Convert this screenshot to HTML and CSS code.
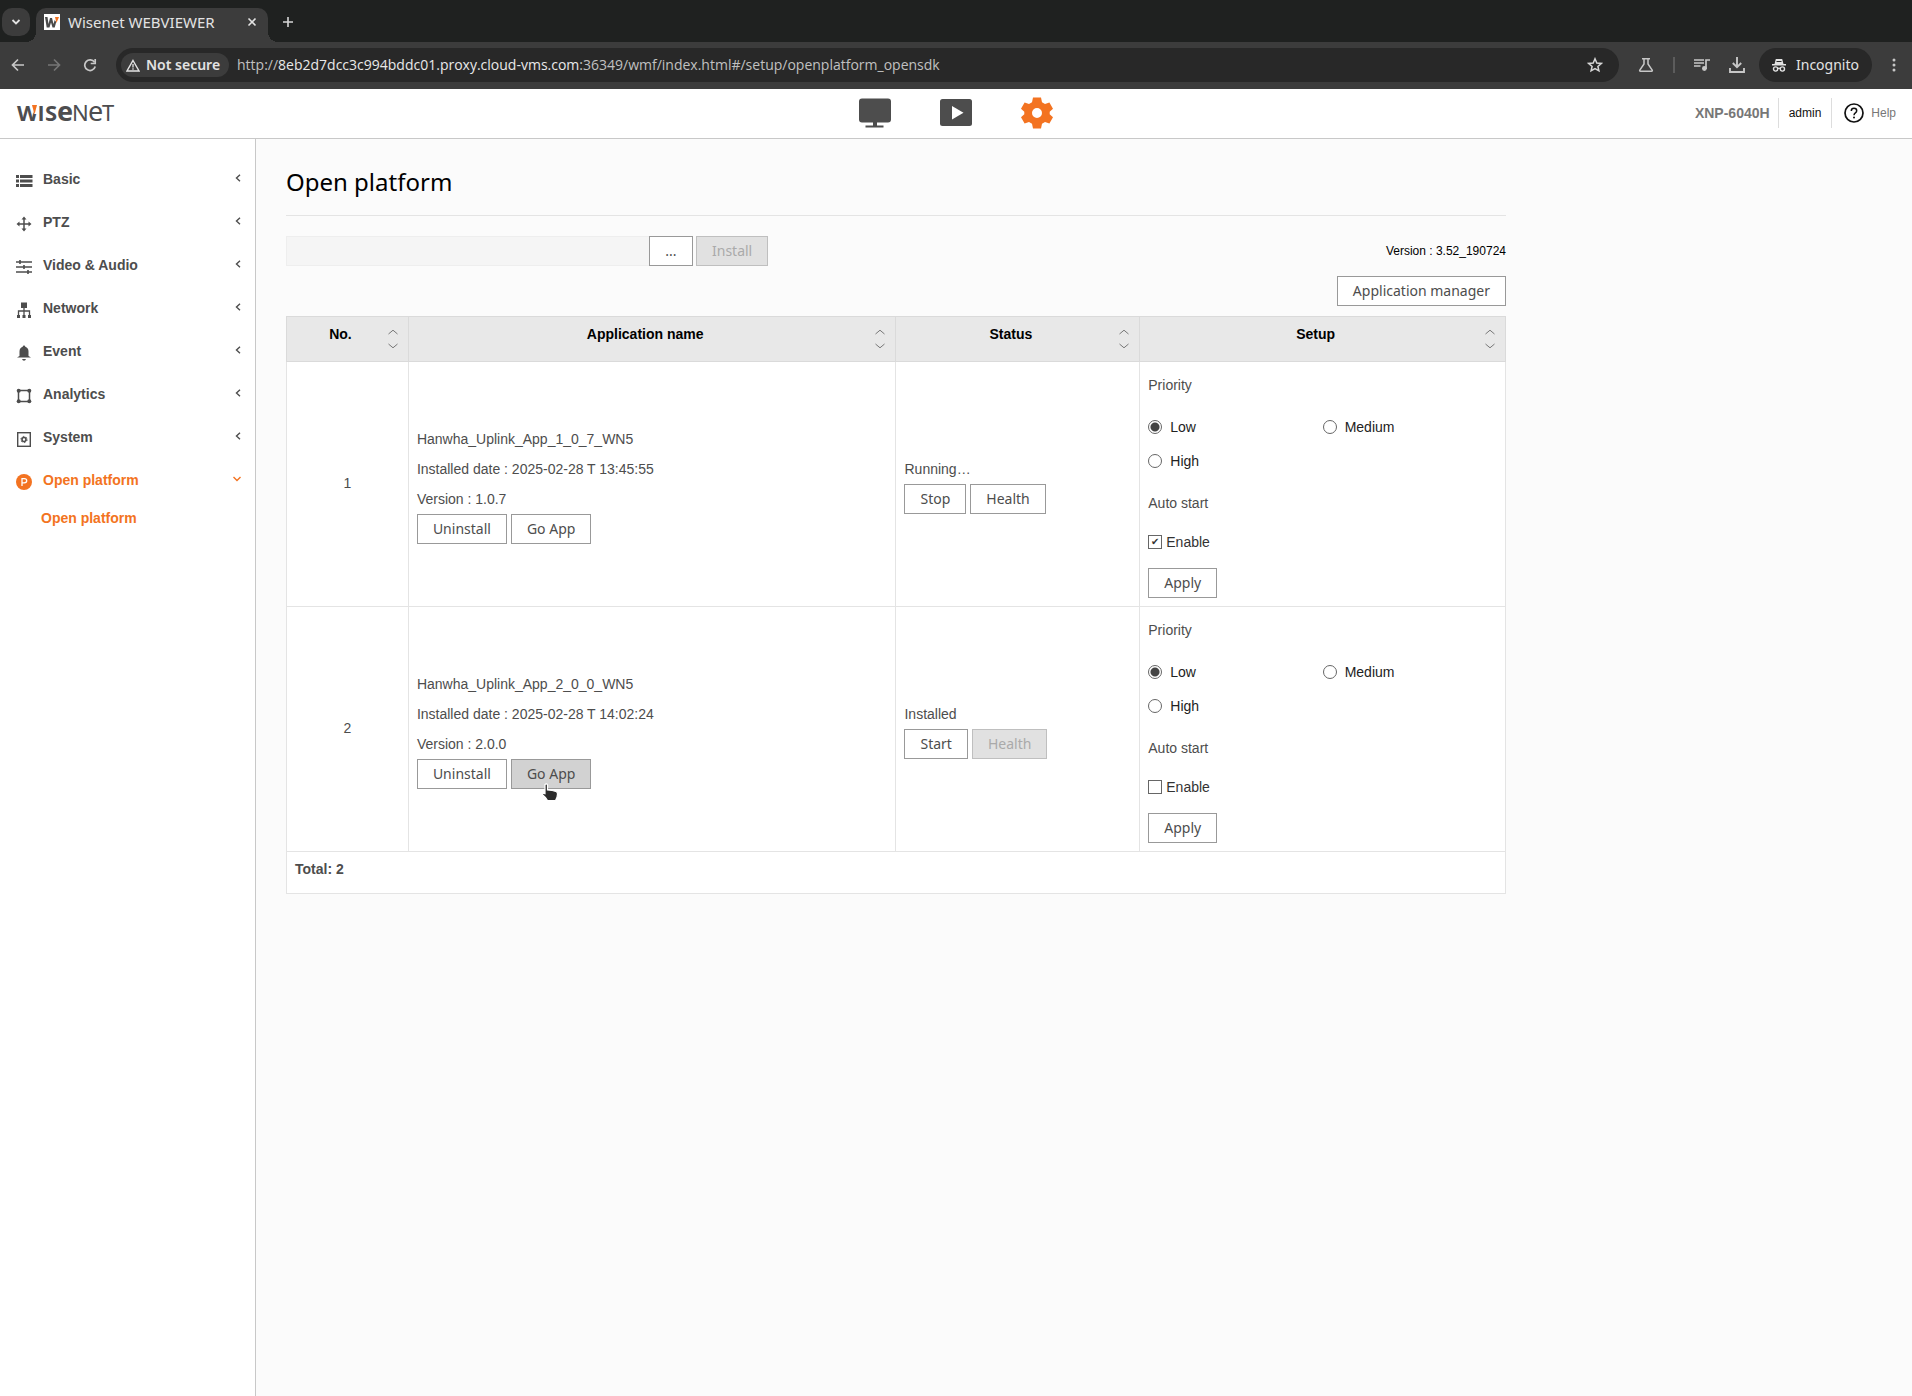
FILE: index.html
```html
<!DOCTYPE html>
<html lang="en">
<head>
<meta charset="utf-8">
<title>Wisenet WEBVIEWER</title>
<link rel="stylesheet" href="styles.css">
</head>
<body>
<div class="browser">
  <div class="tabstrip">
    <button class="tab-search" aria-label="Search tabs"><svg width="10" height="8" viewBox="0 0 10 8"><path d="M1.5 2 5 5.5 8.500 2" fill="none" stroke="#e3e3e3" stroke-width="1.800"/></svg></button>
    <div class="tab">
      <svg class="favicon" width="16" height="16" viewBox="0 0 16 16"><rect width="16" height="16" fill="#fff"/><path d="M1 3h2.500l1 7 1.500-6h2l1.500 6 1.200-4 1.500 2-1.500 5.500H8.500L7 8.500 5.500 13.500H2.700z" fill="#4a4a4a"/><path d="M11 3h4l-2.500 6z" fill="#f37321"/></svg>
      <span class="tab-title">Wisenet WEBVIEWER</span>
      <button class="icon-btn" aria-label="Close tab"><svg width="10" height="10" viewBox="0 0 10 10"><path d="M1.500 1.500l7 7M8.500 1.500l-7 7" stroke="#e3e3e3" stroke-width="1.600"/></svg></button>
    </div>
    <button class="icon-btn new-tab" aria-label="New tab"><svg width="12" height="12" viewBox="0 0 12 12"><path d="M6 1v10M1 6h10" stroke="#d6d6d6" stroke-width="1.600"/></svg></button>
  </div>
  <div class="toolbar">
    <div class="nav-buttons">
      <button class="icon-btn" aria-label="Back"><svg width="14" height="14" viewBox="0 0 14 14"><path d="M13 7H2M7 1.500 1.500 7 7 12.500" fill="none" stroke="#c7c7c7" stroke-width="1.700"/></svg></button>
      <button class="icon-btn" aria-label="Forward"><svg width="14" height="14" viewBox="0 0 14 14"><path d="M1 7h11M7 1.500 12.500 7 7 12.500" fill="none" stroke="#757575" stroke-width="1.700"/></svg></button>
      <button class="icon-btn" aria-label="Reload"><svg width="14" height="14" viewBox="0 0 14 14"><path d="M11.500 4.300A5.300 5.300 0 1 0 12.200 8.500" fill="none" stroke="#c7c7c7" stroke-width="1.700"/><path d="M12.200 1v4.500H7.700" fill="none" stroke="#c7c7c7" stroke-width="1.700"/></svg></button>
    </div>
    <div class="omnibox">
      <button class="chip"><svg width="14" height="13" viewBox="0 0 14 13"><path d="M7 1.500 13 12H1z" fill="none" stroke="#e3e3e3" stroke-width="1.400"/><path d="M7 5v3.500M7 9.300v1.400" stroke="#e3e3e3" stroke-width="1.300"/></svg><span>Not secure</span></button>
      <span class="url">http://<b>8eb2d7dcc3c994bddc01.proxy.cloud-vms.com</b>:36349/wmf/index.html#/setup/openplatform_opensdk</span>
      <button class="icon-btn star" aria-label="Bookmark"><svg width="16" height="16" viewBox="0 0 16 16"><path d="M8 1.800 9.800 6l4.500.4-3.400 3 1 4.400L8 11.500l-3.900 2.300 1-4.400-3.400-3L6.200 6z" fill="none" stroke="#d6d6d6" stroke-width="1.500"/></svg></button>
    </div>
    <button class="icon-btn" aria-label="Labs"><svg width="16" height="16" viewBox="0 0 16 16"><path d="M4 1.800h8M6 2v5L1.800 13.200q-.5 1 .6 1h11.200q1.100 0 .6-1L10 7V2" fill="none" stroke="#c7c7c7" stroke-width="1.500"/></svg></button>
    <span class="tool-sep"></span>
    <button class="icon-btn" aria-label="Media"><svg width="16" height="14" viewBox="0 0 16 14"><path d="M0 2h10M0 5h10M0 8h6.500M12 11V2h4" fill="none" stroke="#c7c7c7" stroke-width="1.700"/><circle cx="10.400" cy="10.500" r="2.400" fill="#c7c7c7"/></svg></button>
    <button class="icon-btn" aria-label="Downloads"><svg width="16" height="16" viewBox="0 0 16 16"><path d="M8 0v10M3.800 6 8 10.200 12.200 6M1 11v4h14v-4" fill="none" stroke="#c7c7c7" stroke-width="1.900"/></svg></button>
    <button class="incognito"><svg width="14" height="14" viewBox="0 0 14 14"><path d="M3.800 1h6.400L11.500 6H14v1.400H0V6h2.500z" fill="#e3e3e3"/><path d="M4.500 3.500h5" stroke="#282828" stroke-width="1"/><circle cx="3.600" cy="11" r="2.100" fill="none" stroke="#e3e3e3" stroke-width="1.400"/><circle cx="10.400" cy="11" r="2.100" fill="none" stroke="#e3e3e3" stroke-width="1.400"/><path d="M5.500 10.600q1.500-.8 3 0" fill="none" stroke="#e3e3e3" stroke-width="1.200"/></svg><span>Incognito</span></button>
    <button class="icon-btn menu" aria-label="Menu"><svg width="4" height="14" viewBox="0 0 4 14"><g fill="#c7c7c7"><circle cx="2" cy="2" r="1.500"/><circle cx="2" cy="7" r="1.500"/><circle cx="2" cy="12" r="1.500"/></g></svg></button>
  </div>
</div>

<header class="app-header">
  <a class="logo" href="#" aria-label="Wisenet"><svg width="106" height="44" viewBox="0 0 106 44"><g class="logo-text" fill="#4d4d4f"><text x="1" y="30" font-size="22" font-weight="700">W</text><path d="M14.500 10H24v13h-6z" fill="#fff"/><text class="plain" x="22" y="30" font-size="22" font-weight="700">I</text><text x="29" y="30" font-size="22" font-weight="700">S</text><text x="41" y="30" font-size="27" font-weight="700">e</text><text x="56" y="30" font-size="22">N</text><text x="72" y="30" font-size="27">e</text><text x="86" y="30" font-size="22">T</text></g><path d="M16 14h5l-2.500 9.500z" fill="#f37321"/></svg></a>
  <nav class="modes">
    <a href="#" aria-label="Live"><svg width="34" height="32" viewBox="0 0 34 32"><path d="M4 1.500h26q3 0 3 3v18q0 3-3 3H19v3h6.500v2h-18v-2H15v-3H4q-3 0-3-3v-18q0-3 3-3z" fill="#4d4d4d"/></svg></a>
    <a href="#" aria-label="Playback"><svg width="34" height="32" viewBox="0 0 34 32"><rect x="1" y="2" width="32" height="27" rx="2.500" fill="#4d4d4d"/><path d="M13 9v13.500L24.500 15.700z" fill="#fff"/></svg></a>
    <a href="#" aria-label="Setup"><svg width="34" height="32" viewBox="0 0 34 32"><path fill-rule="evenodd" d="M13 .5h8l1 4.700 3 1.800 4.400-1.500 3.600 6.200-3.300 3v2.600l3.300 3-3.600 6.200-4.400-1.500-3 1.800-1 4.700h-8l-1-4.700-3-1.800-4.400 1.500L1 20.300l3.300-3v-2.600l-3.300-3 3.600-6.200L9 7l3-1.800zM17 11a5 5 0 1 0 0 10 5 5 0 0 0 0-10z" fill="#f37321"/></svg></a>
  </nav>
  <div class="account">
    <span class="model">XNP-6040H</span>
    <a class="user" href="#">admin</a>
    <a class="help" href="#"><svg width="20" height="20" viewBox="0 0 20 20"><circle cx="10" cy="10" r="9" fill="none" stroke="#111" stroke-width="1.700"/><path d="M7.300 8q0-2.700 2.700-2.700T12.700 7.700q0 1.300-1.300 2.200T10 12.200" fill="none" stroke="#111" stroke-width="1.500"/><circle cx="10" cy="14.600" r="1" fill="#111"/></svg><span>Help</span></a>
  </div>
</header>

<div class="shell">
  <nav class="sidebar">
    <a class="item" href="#"><svg width="18" height="18" viewBox="0 0 18 18"><path d="M1 4.500h3M1 9h3M1 13.500h3M5 4.500h12.500M5 9h12.500M5 13.500h12.500" stroke="#4d4d4d" stroke-width="3"/></svg><span>Basic</span><svg class="chev" width="6" height="8" viewBox="0 0 6 8"><path d="M5 .8 1.500 4 5 7.200"/></svg></a>
    <a class="item" href="#"><svg width="18" height="18" viewBox="0 0 18 18"><path d="M9 3v12M3 9h12" stroke="#4d4d4d" stroke-width="1.500"/><path d="M9 1.500 11.500 4.500h-5zM9 16.500 6.500 13.500h5zM1.500 9 4.500 6.500v5zM16.500 9 13.500 11.500v-5z" fill="#4d4d4d"/></svg><span>PTZ</span><svg class="chev" width="6" height="8" viewBox="0 0 6 8"><path d="M5 .8 1.500 4 5 7.200"/></svg></a>
    <a class="item" href="#"><svg width="18" height="18" viewBox="0 0 18 18"><path d="M1 4h16M1 9h16M1 14h16M5 2v4M9 7v4M13 12v4" stroke="#4d4d4d" stroke-width="1.600"/></svg><span>Video &amp; Audio</span><svg class="chev" width="6" height="8" viewBox="0 0 6 8"><path d="M5 .8 1.500 4 5 7.200"/></svg></a>
    <a class="item" href="#"><svg width="18" height="18" viewBox="0 0 18 18"><path d="M6 1.500h6V7H6zM2 14h3v3H2zM7.500 14h3v3h-3zM13 14h3v3h-3z" fill="#4d4d4d"/><path d="M9 7v8M3.500 15v-5h11v5" fill="none" stroke="#4d4d4d" stroke-width="1.300"/></svg><span>Network</span><svg class="chev" width="6" height="8" viewBox="0 0 6 8"><path d="M5 .8 1.500 4 5 7.200"/></svg></a>
    <a class="item" href="#"><svg width="18" height="18" viewBox="0 0 18 18"><path d="M9 1.500q1.200 0 1.300 1.200 3.200 1 3.200 4.800v4.500l2.500 1.500H2L4.500 12V7.500q0-3.800 3.200-4.800Q7.800 1.500 9 1.500zM7 15h4q-.5 1.700-2 1.700T7 15z" fill="#4d4d4d"/></svg><span>Event</span><svg class="chev" width="6" height="8" viewBox="0 0 6 8"><path d="M5 .8 1.500 4 5 7.200"/></svg></a>
    <a class="item" href="#"><svg width="18" height="18" viewBox="0 0 18 18"><rect x="3.500" y="3.500" width="11" height="11" fill="none" stroke="#4d4d4d" stroke-width="1.500"/><g fill="#4d4d4d"><circle cx="3.700" cy="3.700" r="2"/><circle cx="14.300" cy="3.700" r="2"/><circle cx="3.700" cy="14.300" r="2"/><circle cx="14.300" cy="14.300" r="2"/></g></svg><span>Analytics</span><svg class="chev" width="6" height="8" viewBox="0 0 6 8"><path d="M5 .8 1.500 4 5 7.200"/></svg></a>
    <a class="item" href="#"><svg width="18" height="18" viewBox="0 0 18 18"><rect x="2.700" y="2.700" width="12.600" height="13.600" fill="none" stroke="#4d4d4d" stroke-width="1.400"/><circle cx="9" cy="9.500" r="2" fill="none" stroke="#4d4d4d" stroke-width="1.600"/><circle cx="9" cy="9.500" r="3.100" fill="none" stroke="#4d4d4d" stroke-width="1" stroke-dasharray="1.600 1.640"/></svg><span>System</span><svg class="chev" width="6" height="8" viewBox="0 0 6 8"><path d="M5 .8 1.500 4 5 7.200"/></svg></a>
    <a class="item active" href="#"><svg width="18" height="18" viewBox="0 0 18 18"><circle cx="9" cy="9" r="8" fill="#f37321"/><path d="M7 13V5.700h2.300q2.400 0 2.400 2T9.300 9.800H7" fill="none" stroke="#fff" stroke-width="1.300"/></svg><span>Open platform</span><svg class="chev" width="8" height="6" viewBox="0 0 8 6"><path d="M.5 1 4 4.500 7.500 1"/></svg></a>
    <a class="subitem" href="#">Open platform</a>
  </nav>

  <main class="content">
    <h1>Open platform</h1>
    <div class="install-row">
      <input class="file" type="text" aria-label="Application file" disabled>
      <button class="btn browse">...</button>
      <button class="btn install" disabled>Install</button>
      <span class="fw">Version : 3.52_190724</span>
    </div>
    <div class="manager-row"><button class="btn">Application manager</button></div>

    <table class="apps">
      <colgroup><col class="c-no"><col class="c-name"><col class="c-status"><col class="c-setup"></colgroup>
      <thead>
        <tr>
          <th><div class="th"><span>No.</span><svg width="10" height="20" viewBox="0 0 10 20"><path d="M.5 5 5 1.200 9.500 5M.5 15 5 18.800 9.500 15"/></svg></div></th>
          <th><div class="th"><span>Application name</span><svg width="10" height="20" viewBox="0 0 10 20"><path d="M.5 5 5 1.200 9.500 5M.5 15 5 18.800 9.500 15"/></svg></div></th>
          <th><div class="th"><span>Status</span><svg width="10" height="20" viewBox="0 0 10 20"><path d="M.5 5 5 1.200 9.500 5M.5 15 5 18.800 9.500 15"/></svg></div></th>
          <th><div class="th"><span>Setup</span><svg width="10" height="20" viewBox="0 0 10 20"><path d="M.5 5 5 1.200 9.500 5M.5 15 5 18.800 9.500 15"/></svg></div></th>
        </tr>
      </thead>
      <tbody>
        <tr>
          <td class="num">1</td>
          <td>
            <p>Hanwha_Uplink_App_1_0_7_WN5</p>
            <p>Installed date : 2025-02-28 T 13:45:55</p>
            <p>Version : 1.0.7</p>
            <div class="btns"><button class="btn">Uninstall</button><button class="btn">Go App</button></div>
          </td>
          <td>
            <p>Running…</p>
            <div class="btns"><button class="btn">Stop</button><button class="btn">Health</button></div>
          </td>
          <td>
            <p id="p1">Priority</p>
            <div class="radios" role="radiogroup" aria-labelledby="p1">
              <label><input type="radio" name="prio1" checked>Low</label>
              <label><input type="radio" name="prio1">Medium</label>
              <label><input type="radio" name="prio1">High</label>
            </div>
            <p>Auto start</p>
            <label class="enable"><input type="checkbox" checked>Enable</label>
            <button class="btn">Apply</button>
          </td>
        </tr>
        <tr>
          <td class="num">2</td>
          <td>
            <p>Hanwha_Uplink_App_2_0_0_WN5</p>
            <p>Installed date : 2025-02-28 T 14:02:24</p>
            <p>Version : 2.0.0</p>
            <div class="btns"><button class="btn">Uninstall</button><button class="btn hovered">Go App<svg class="pointer" width="18" height="19" viewBox="0 0 18 19"><path d="M4 1.500q1.500-1.300 2.500.3V7q5 .2 8.500 1.500 1.500.6 1.500 2.500 0 3.500-2 6.500H6.500Q5 14.500 1.300 11.500q.2-1.800 2.700-.8z" fill="#2b2b2b" stroke="#fff" stroke-width="1.200"/></svg></button></div>
          </td>
          <td>
            <p>Installed</p>
            <div class="btns"><button class="btn">Start</button><button class="btn" disabled>Health</button></div>
          </td>
          <td>
            <p id="p2">Priority</p>
            <div class="radios" role="radiogroup" aria-labelledby="p2">
              <label><input type="radio" name="prio2" checked>Low</label>
              <label><input type="radio" name="prio2">Medium</label>
              <label><input type="radio" name="prio2">High</label>
            </div>
            <p>Auto start</p>
            <label class="enable"><input type="checkbox">Enable</label>
            <button class="btn">Apply</button>
          </td>
        </tr>
      </tbody>
      <tfoot><tr><td colspan="4">Total: 2</td></tr></tfoot>
    </table>
  </main>
</div>
</body>
</html>
```

FILE: styles.css
```css
* { box-sizing: border-box; }

body {
  margin: 0;
  min-height: 100vh;
  display: flex;
  flex-direction: column;
  font: 14px/30px "Liberation Sans", Arial, sans-serif;
  color: #4d4d4d;
  background: #fff;
}

a { color: inherit; text-decoration: none; }
svg { display: block; flex: none; }
p { margin: 0; }

button {
  font: inherit;
  color: inherit;
  border: 0;
  padding: 0;
  background: none;
}

/* Browser frame */
.browser {
  font: 14px/20px "Noto Sans", sans-serif;
  color: #e3e3e3;
  background: #1f2120;
}

.tabstrip {
  display: flex;
  align-items: flex-start;
  gap: 6px;
  height: 42px;
  padding: 8px 2px 0;
}

.tab-search {
  display: flex;
  align-items: center;
  justify-content: center;
  width: 28px;
  height: 28px;
  border-radius: 10px;
  background: #3c3c3c;
}

.tab {
  display: flex;
  align-items: center;
  gap: 8px;
  width: 232px;
  height: 34px;
  padding: 0 8px 6px;
  border-radius: 10px 10px 0 0;
  background: #3c3c3c;
  position: relative;
}

.tab::before,
.tab::after {
  content: "";
  position: absolute;
  bottom: 0;
  width: 10px;
  height: 10px;
}
.tab::before { left: -10px; background: radial-gradient(circle at 0 0, transparent 10px, #3c3c3c 10px); }
.tab::after { right: -10px; background: radial-gradient(circle at 100% 0, transparent 10px, #3c3c3c 10px); }

.tab-title { flex: 1; font-size: 15px; white-space: nowrap; }

.icon-btn {
  display: flex;
  align-items: center;
  justify-content: center;
  width: 16px;
  height: 28px;
}

.new-tab { width: 28px; }

.toolbar {
  display: flex;
  align-items: center;
  height: 47px;
  padding: 0 10px 1px;
  gap: 19px;
  background: #3c3c3c;
}

.nav-buttons { display: flex; gap: 20px; margin-right: -1px; }

.omnibox {
  flex: 1;
  min-width: 0;
  display: flex;
  align-items: center;
  gap: 8px;
  height: 34px;
  padding: 0 16px 0 5px;
  border-radius: 17px;
  background: #282828;
}

.chip,
.incognito {
  display: flex;
  align-items: center;
  gap: 6px;
  white-space: nowrap;
}

.chip {
  height: 24px;
  width: 108px;
  padding: 0 5px;
  border-radius: 12px;
  font-weight: 600;
  background: #3c3c3c;
}

.url {
  flex: 1;
  min-width: 0;
  overflow: hidden;
  white-space: nowrap;
  font-family: "Open Sans", sans-serif;
  color: #c0c0c0;
}
.url b { font-weight: 400; color: #e8e8e8; }

.tool-sep { width: 2px; height: 16px; background: #5c5c5c; }

.incognito {
  gap: 10px;
  width: 113px;
  height: 34px;
  margin: 0 -5px;
  padding: 0 13px;
  border-radius: 17px;
  background: #282828;
}

/* Application header */
.app-header {
  display: grid;
  grid-template-columns: 1fr auto 1fr;
  align-items: center;
  height: 50px;
  padding: 0 16px 2px;
  border-bottom: 1px solid #c8c8c8;
}

.logo-text { font-family: "Noto Sans", sans-serif; }
.logo-text .plain { font-family: "Liberation Sans", sans-serif; }
.modes { display: flex; gap: 47px; }

.account {
  display: flex;
  align-items: center;
  justify-content: flex-end;
}
.model { padding-right: 8px; font-weight: 700; color: #777; }
.user,
.help { border-left: 1px solid #ddd; font-size: 12px; }
.user { padding: 0 10px; color: #111; }
.help { display: flex; align-items: center; gap: 7px; padding-left: 12px; color: #777; }

/* Main area */
.shell { flex: 1; display: flex; }

.sidebar {
  width: 256px;
  flex: none;
  padding-top: 18px;
  border-right: 1px solid #c8c8c8;
  font-weight: 700;
}

.item {
  display: grid;
  grid-template-columns: 18px 1fr auto;
  align-items: center;
  column-gap: 10px;
  height: 43px;
  padding: 0 14px 0 15px;
}
.item > svg:first-child { margin-top: 4px; }

.chev { margin-bottom: 2px; fill: none; stroke: #4d4d4d; stroke-width: 1.400px; }
.active .chev { stroke: #f37321; }
.active,
.subitem { color: #f37321; }
.subitem { display: block; padding: 2px 41px; }

.content {
  flex: 1;
  min-width: 0;
  padding: 23px 30px;
  background: #fbfbfb;
}
.content > * { max-width: 1220px; }

h1 {
  margin: 0 0 20px;
  padding-bottom: 13px;
  border-bottom: 1px solid #e4e4e4;
  font: 24px/40px "Noto Sans", sans-serif;
  color: #000;
}

.install-row { display: flex; }

.file {
  width: 363px;
  height: 30px;
  border: 1px solid #eee;
  border-right: 0;
  background: #f5f5f5;
}

.btn {
  position: relative;
  height: 30px;
  padding: 0 15px;
  border: 1px solid #999;
  font: 14px/28px "Noto Sans", sans-serif;
  color: #4d4d4d;
  background: #fff;
}
.btn:disabled { border-color: #bfbfbf; color: #aaa; background: #e1e1e1; }
.btn.hovered { background: #d2d2d2; }
.browse { width: 44px; }
.install { margin-left: 3px; }

.pointer { position: absolute; left: 29px; top: 23px; }

.fw { margin-left: auto; font-size: 12px; color: #000; }
.manager-row { display: flex; justify-content: flex-end; padding: 10px 0; }

.apps {
  width: 100%;
  table-layout: fixed;
  border-collapse: collapse;
  background: #fff;
}
.c-no { width: 10%; }
.c-name { width: 40%; }
.c-status { width: 20%; }
.c-setup { width: 30%; }

th,
td { padding: 0 8px; border: 1px solid #e4e4e4; text-align: left; }

th { height: 45px; border-color: #dadada; color: #000; background: #e8e8e8; }
.th { display: flex; align-items: center; padding-right: 2px; }
.th span { flex: 1; text-align: center; margin: 0 2px 10px 0; }
.th svg { fill: none; stroke: #777; }

td { height: 245px; }
.num { padding-bottom: 2px; text-align: center; }
.btns { display: flex; gap: 4px; }

.radios {
  display: grid;
  grid-template-columns: 1fr 1fr;
  padding: 10px 0;
  color: #222;
}
.radios label,
.enable { display: flex; align-items: center; line-height: 34px; }
.radios label { gap: 8px; }
.enable { gap: 4px; margin: 7px 0 9px; width: max-content; color: #333; }

input[type="radio"],
input[type="checkbox"] {
  appearance: none;
  width: 14px;
  height: 14px;
  margin: 0;
  border: 1px solid #666;
  background: #fff;
}
input[type="radio"] { border-radius: 50%; }
input[type="radio"]:checked { background: radial-gradient(circle, #444 4px, #fff 5px); }
input[type="checkbox"]:checked::before {
  content: "✔";
  display: block;
  font: 10px/12px "DejaVu Sans", sans-serif;
  text-align: center;
  color: #333;
}

tfoot td { height: 42px; padding-bottom: 8px; font-weight: 700; }
```
